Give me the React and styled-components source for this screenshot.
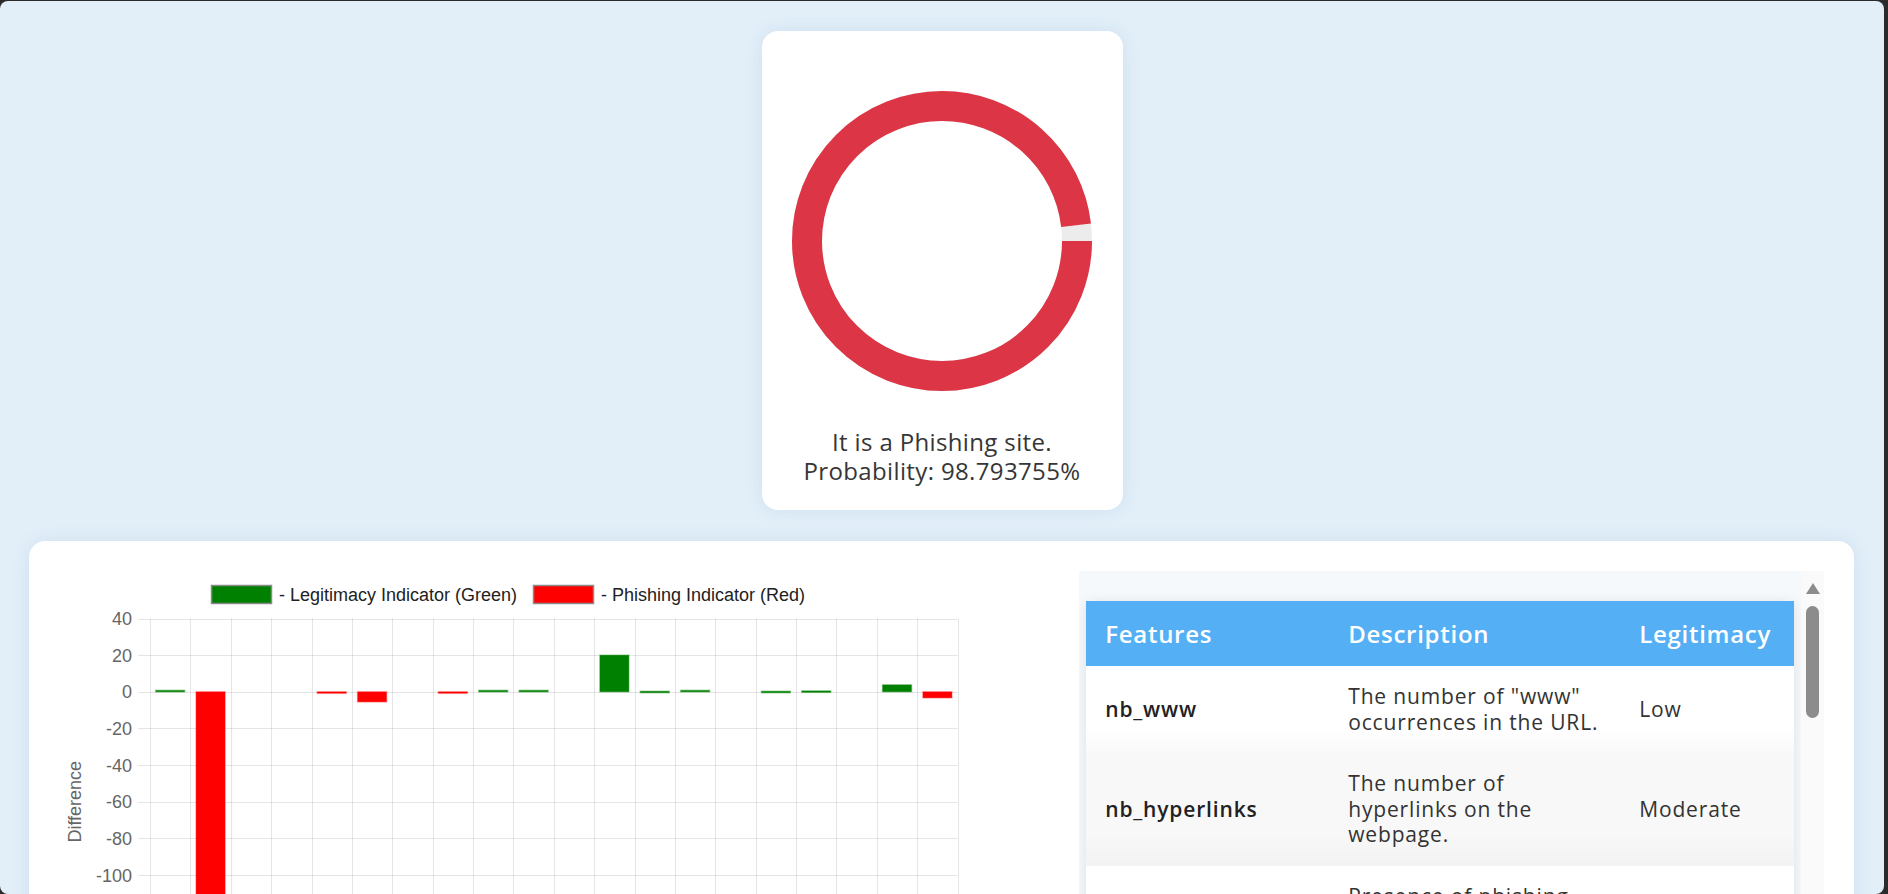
import styled, { createGlobalStyle } from 'styled-components';

const GlobalStyle = createGlobalStyle`
  html,
  body {
    margin: 0;
    height: 100%;
    overflow: hidden;
    background: #2b2b2b;
  }

  #root {
    height: 100%;
  }
`;

// phishing probability shown by the doughnut
const PROBABILITY = 98.793755;

// chart.js style geometry for the difference chart
const CHART = { left: 91, top: 47.5, step: 36.65, catW: 40.38, cats: 20, barW: 29 };
const TICKS = [40, 20, 0, -20, -40, -60, -80, -100, -120, -140, -160];
const DIFFS = [0.8, -135, 0, 0, -0.8, -5.5, 0, -0.8, 0.8, 0.8, 0, 20, 0.3, 0.8, 0, 0.3, 0.5, 0, 3.8, -3.3];

const yOf = (v) => CHART.top + ((40 - v) / 20) * CHART.step;

const FEATURES = [
  { name: 'nb_www', desc: 'The number of "www" occurrences in the URL.', level: 'Low' },
  { name: 'nb_hyperlinks', desc: 'The number of hyperlinks on the webpage.', level: 'Moderate' },
  { name: 'phish_hints', desc: 'Presence of phishing hints in the URL words.', level: 'High' },
  { name: 'google_index', desc: 'Whether the page is indexed by Google.', level: 'High' },
  { name: 'page_rank', desc: 'The PageRank value of the domain.', level: 'High' },
  { name: 'web_traffic', desc: 'Estimated traffic of the website.', level: 'Moderate' },
];

const Donut = ({ value }) => {
  const r = 135;
  const circ = 2 * Math.PI * r;
  // the slice borders eat a few pixels of the red arc, as in the chart.js doughnut
  const red = (circ * value) / 100 - 6;
  return (
    <svg width='300' height='300' viewBox='0 0 300 300'>
      <circle cx='150' cy='150' r={r} fill='none' stroke='#ececec' strokeWidth='30' />
      <circle
        cx='150'
        cy='150'
        r={r}
        fill='none'
        stroke='#dc3545'
        strokeWidth='30'
        strokeDasharray={`${red} ${circ}`}
      />
    </svg>
  );
};

const DiffChart = () => {
  const right = CHART.left + CHART.cats * CHART.catW;
  const bottom = yOf(-160);
  const zero = yOf(0);

  return (
    <svg width='900' height='330' viewBox='0 0 900 330'>
      {/* legend */}
      <rect x='152.5' y='14.5' width='60' height='18' fill='#008000' stroke='#8a8a8a' strokeWidth='1.5' />
      <text x='220' y='30' fontSize='18' fill='#222'>
        - Legitimacy Indicator (Green)
      </text>
      <rect x='474.5' y='14.5' width='60' height='18' fill='#ff0000' stroke='#8a8a8a' strokeWidth='1.5' />
      <text x='542' y='30' fontSize='18' fill='#222'>
        - Phishing Indicator (Red)
      </text>

      {/* grid */}
      {TICKS.map((t) => (
        <g key={t}>
          <line
            x1={CHART.left - 12}
            x2={right}
            y1={Math.round(yOf(t)) + 0.5}
            y2={Math.round(yOf(t)) + 0.5}
            stroke='rgba(0,0,0,0.1)'
          />
          <text x='73' y={yOf(t) + 6.5} fontSize='18' fill='#666' textAnchor='end'>
            {t}
          </text>
        </g>
      ))}
      {Array.from({ length: CHART.cats + 1 }, (_, i) => {
        const x = Math.round(CHART.left + i * CHART.catW) + 0.5;
        return <line key={i} x1={x} x2={x} y1={CHART.top} y2={bottom + 12} stroke='rgba(0,0,0,0.1)' />;
      })}

      <text
        transform={`translate(22 ${(CHART.top + bottom) / 2}) rotate(-90)`}
        fontSize='18'
        fill='#666'
        textAnchor='middle'
      >
        Difference
      </text>

      {/* bars */}
      {DIFFS.map((v, i) => {
        if (v === 0) return null;
        const x = CHART.left + i * CHART.catW + (CHART.catW - CHART.barW) / 2;
        const top = v > 0 ? yOf(v) : zero;
        const h = Math.max(1.5, Math.abs(yOf(v) - zero));
        const color = v > 0 ? '#008000' : '#ff0000';
        return (
          <rect
            key={i}
            x={x}
            y={top}
            width={CHART.barW}
            height={h}
            fill={color}
            stroke={color}
            strokeOpacity='0.35'
            strokeWidth='1.5'
          />
        );
      })}
    </svg>
  );
};

const App = () => {
  return (
    <>
      <GlobalStyle />
      <StyledViewport>
        <StyledMain>
          <StyledResultCard>
            <Donut value={PROBABILITY} />
            <StyledVerdict>
              <span>It is a Phishing site.</span>
              <span>Probability: {PROBABILITY}%</span>
            </StyledVerdict>
          </StyledResultCard>

          <StyledAnalysisCard>
            <StyledChartPanel>
              <DiffChart />
            </StyledChartPanel>

            <StyledTablePanel>
              <StyledTableScroll>
                <StyledTable>
                  <colgroup>
                    <col width='243' />
                    <col width='291' />
                    <col />
                  </colgroup>
                  <thead>
                    <tr>
                      <th>Features</th>
                      <th>Description</th>
                      <th>Legitimacy</th>
                    </tr>
                  </thead>
                  <tbody>
                    {FEATURES.map((feature) => (
                      <tr key={feature.name}>
                        <StyledFeatureName>{feature.name}</StyledFeatureName>
                        <td>{feature.desc}</td>
                        <td>{feature.level}</td>
                      </tr>
                    ))}
                  </tbody>
                </StyledTable>
              </StyledTableScroll>
              <StyledScrollRail>
                <StyledScrollArrow />
                <StyledScrollThumb />
              </StyledScrollRail>
            </StyledTablePanel>
          </StyledAnalysisCard>
        </StyledMain>
      </StyledViewport>
    </>
  );
};

const StyledViewport = styled.div`
  height: calc(100vh - 1px);
  margin: 1px 4px 0 0;
  border-radius: 8px;
  overflow: hidden;
  background: #e2eff9;
  font-family: 'Open Sans', 'Noto Sans', sans-serif;
  color: #333;
`;

const StyledMain = styled.main`
  display: flex;
  flex-direction: column;
  align-items: center;
  padding-top: 30px;
`;

const StyledResultCard = styled.section`
  box-sizing: border-box;
  width: 361px;
  padding: 60px 30px 25px;
  border-radius: 16px;
  background: #fff;
  box-shadow: 0 0 18px rgba(40, 100, 160, 0.1);
  text-align: center;

  svg {
    display: block;
    margin: 0 auto;
  }
`;

const StyledVerdict = styled.p`
  margin: 36px 0 0;
  font-size: 24px;
  line-height: 29px;
  letter-spacing: 0.015em;
  color: #363636;

  span {
    display: block;
  }
`;

const StyledAnalysisCard = styled.section`
  align-self: stretch;
  display: flex;
  justify-content: space-between;
  align-items: flex-start;
  margin: 31px 30px 0 29px;
  padding: 30px;
  border-radius: 16px;
  background: #fff;
  box-shadow: 0 0 18px rgba(40, 100, 160, 0.1);
`;

const StyledChartPanel = styled.div`
  flex: none;
  width: 900px;

  svg {
    display: block;
    font-family: 'Liberation Sans', Arial, sans-serif;
  }
`;

const StyledTablePanel = styled.div`
  flex: none;
  display: flex;
  width: 745px;
  height: 520px;
`;

const StyledTableScroll = styled.div`
  flex: 1;
  overflow-y: auto;
  background: #f5f9fc;
  scrollbar-width: none;

  &::-webkit-scrollbar {
    display: none;
  }
`;

const StyledScrollRail = styled.div`
  flex: none;
  display: flex;
  flex-direction: column;
  align-items: center;
  width: 23px;
  background: #fafafa;
`;

const StyledScrollArrow = styled.div`
  width: 0;
  height: 0;
  margin-top: 12px;
  border-left: 7.5px solid transparent;
  border-right: 7.5px solid transparent;
  border-bottom: 11px solid #8c8c8c;
`;

const StyledScrollThumb = styled.div`
  width: 13px;
  height: 112px;
  margin-top: 12px;
  border-radius: 7px;
  background: #8c8c8c;
`;

const StyledTable = styled.table`
  width: 98%;
  margin: 30px auto 0;
  border-collapse: collapse;
  table-layout: fixed;
  box-shadow: 0 2px 12px rgba(0, 0, 0, 0.1);

  th {
    padding: 18px 19px;
    background: #54aff5;
    color: #fff;
    font-size: 24px;
    line-height: 29px;
    font-weight: 600;
    letter-spacing: 0.03em;
    text-align: left;
  }

  td {
    padding: 18px 19px;
    font-size: 21px;
    line-height: 25.6px;
    letter-spacing: 0.04em;
    color: #333;
    background-image: linear-gradient(to bottom, transparent 70%, rgba(0, 0, 0, 0.025));
  }

  tbody tr:nth-child(odd) td {
    background-color: #fff;
  }

  tbody tr:nth-child(even) td {
    background-color: #f8f8f8;
  }
`;

const StyledFeatureName = styled.td`
  && {
    font-weight: 600;
    color: #222;
  }
`;

export default App;
